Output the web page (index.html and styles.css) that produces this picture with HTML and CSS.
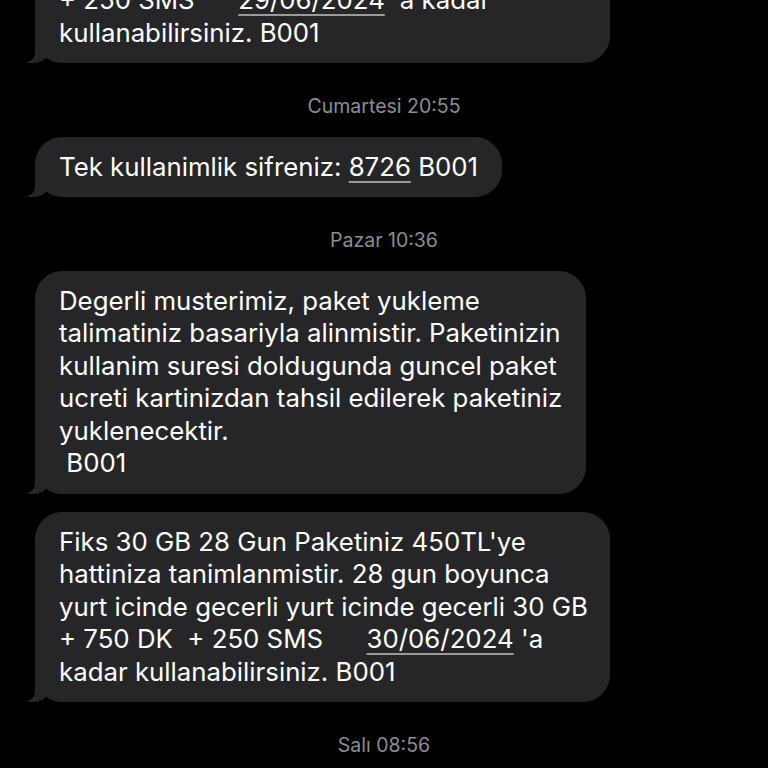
FILE: index.html
```html
<!DOCTYPE html>
<html lang="tr">
<head>
<meta charset="utf-8">
<title>Mesajlar</title>
<link rel="stylesheet" href="styles.css">
</head>
<body>
<main class="thread">
  <div class="bubble wide">Fiks 30 GB 28 Gun Paketiniz 450TL'ye<br>hattiniza tanimlanmistir. 28 gun boyunca<br>yurt icinde gecerli 30 GB + 750 DK<br>+ 250 SMS &nbsp; &nbsp; &nbsp;<span class="link">29/06/2024</span> 'a kadar<br>kullanabilirsiniz. B001</div>
  <div class="stamp">Cumartesi 20:55</div>
  <div class="bubble">Tek kullanimlik sifreniz: <span class="link">8726</span> B001</div>
  <div class="stamp">Pazar 10:36</div>
  <div class="bubble">Degerli musterimiz, paket yukleme<br>talimatiniz basariyla alinmistir. Paketinizin<br>kullanim suresi doldugunda guncel paket<br>ucreti kartinizdan tahsil edilerek paketiniz<br>yuklenecektir.<br>&nbsp;B001</div>
  <div class="bubble next">Fiks 30 GB 28 Gun Paketiniz 450TL'ye<br>hattiniza tanimlanmistir. 28 gun boyunca<br>yurt icinde gecerli yurt icinde gecerli 30 GB<br>+ 750 DK&nbsp; + 250 SMS &nbsp; &nbsp; &nbsp;<span class="link">30/06/2024</span> 'a<br>kadar kullanabilirsiniz. B001</div>
  <div class="stamp">Salı 08:56</div>
</main>
</body>
</html>
```
FILE: styles.css
```css
html, body {
  margin: 0;
  padding: 0;
  background: #000;
  height: 100%;
  overflow: hidden;
}

body {
  font-family: Inter, "Noto Sans", sans-serif;
  color: #fff;
}

.thread {
  display: flex;
  flex-direction: column;
  align-items: flex-start;
  padding-left: 35px;
  margin-top: -127.5px;
}

.bubble {
  position: relative;
  background: #262628;
  border-radius: 27px;
  padding: 14px 24px;
  font-size: 25.8px;
  line-height: 32.5px;
  white-space: nowrap;
  box-sizing: border-box;
}

.bubble.wide {
  width: 575px;
}

.bubble.next {
  margin-top: 18px;
  width: 575px;
}

.bubble::before {
  content: "";
  position: absolute;
  left: -8px;
  bottom: 0;
  width: 24px;
  height: 22px;
  background: #262628;
  border-bottom-right-radius: 18px 16px;
}

.bubble::after {
  content: "";
  position: absolute;
  left: -12px;
  bottom: 0;
  width: 12px;
  height: 22px;
  background: #000;
  border-bottom-right-radius: 12px 10px;
}

.link {
  text-decoration: underline;
  text-decoration-color: #9a9a9e;
  text-decoration-thickness: 1.5px;
  text-underline-offset: 5px;
}

.stamp {
  align-self: stretch;
  margin: 32px 0 19.5px -35px;
  text-align: center;
  font-size: 19.5px;
  line-height: 22px;
  color: #8d8d92;
}
```
